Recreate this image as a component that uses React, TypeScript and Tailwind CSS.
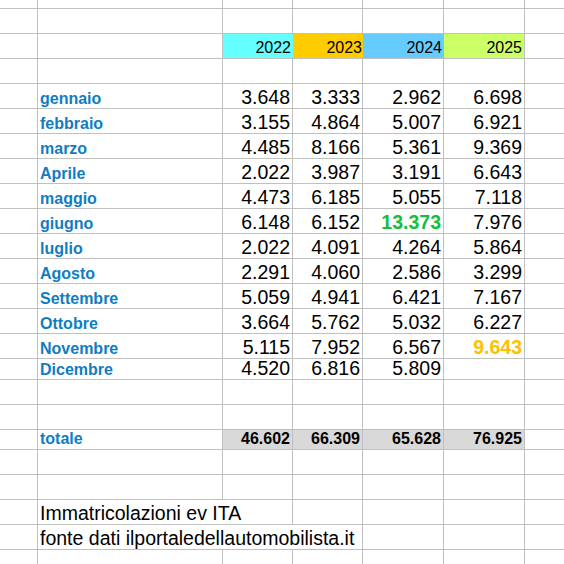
import type { ReactNode } from "react";

type Month = {
  name: string;
  values: (string | null)[];
  accent?: { index: number; className: string };
};

const months: Month[] = [
  { name: "gennaio", values: ["3.648", "3.333", "2.962", "6.698"] },
  { name: "febbraio", values: ["3.155", "4.864", "5.007", "6.921"] },
  { name: "marzo", values: ["4.485", "8.166", "5.361", "9.369"] },
  { name: "Aprile", values: ["2.022", "3.987", "3.191", "6.643"] },
  { name: "maggio", values: ["4.473", "6.185", "5.055", "7.118"] },
  {
    name: "giugno",
    values: ["6.148", "6.152", "13.373", "7.976"],
    accent: { index: 2, className: "font-bold text-[#16bf3e]" },
  },
  { name: "luglio", values: ["2.022", "4.091", "4.264", "5.864"] },
  { name: "Agosto", values: ["2.291", "4.060", "2.586", "3.299"] },
  { name: "Settembre", values: ["5.059", "4.941", "6.421", "7.167"] },
  { name: "Ottobre", values: ["3.664", "5.762", "5.032", "6.227"] },
  {
    name: "Novembre",
    values: ["5.115", "7.952", "6.567", "9.643"],
    accent: { index: 3, className: "font-bold text-[#ffc000]" },
  },
  { name: "Dicembre", values: ["4.520", "6.816", "5.809", null] },
];

const totals = ["46.602", "66.309", "65.628", "76.925"];

function Cell({
  children,
  className = "",
  bg = "bg-white",
}: {
  children?: ReactNode;
  className?: string;
  bg?: string;
}) {
  return (
    <div
      className={`flex items-end overflow-visible whitespace-nowrap ${bg} ${className}`}
    >
      {children}
    </div>
  );
}

function BlankRow() {
  return (
    <>
      {Array.from({ length: 7 }).map((_, i) => (
        <Cell key={i} />
      ))}
    </>
  );
}

function MonthRow({ month }: { month: Month }) {
  return (
    <>
      <Cell />
      <Cell className="pb-[1.5px] pl-[2px] text-[16px] font-bold leading-none text-[#0f7dc2]">
        {month.name}
      </Cell>
      {month.values.map((v, i) => (
        <Cell
          key={i}
          className={`justify-end pb-px pr-[2px] text-[19.5px] leading-none ${
            month.accent?.index === i ? month.accent.className : "text-black"
          }`}
        >
          {v}
        </Cell>
      ))}
      <Cell />
    </>
  );
}

export default function App() {
  return (
    <div className="h-[564px] w-[564px] overflow-hidden bg-white font-['Liberation_Sans',Arial,sans-serif]">
      <div className="grid grid-cols-[37px_184px_69px_69px_80px_80px_1fr] grid-rows-[8px_24px_24px_24px_24px_24px_24px_24px_24px_24px_24px_24px_24px_24px_24px_20px_24px_24px_19px_24px_24px_24px_24px_24px] gap-px bg-[#c0c0c0]">
        <BlankRow />
        <BlankRow />

        {/* intestazione anni */}
        <Cell />
        <Cell />
        <Cell
          bg="bg-[#66ffff]"
          className="mr-[-1px] justify-end pb-[2px] pr-[2px] text-[16px] leading-none"
        >
          2022
        </Cell>
        <Cell
          bg="bg-[#ffcc00]"
          className="mr-[-1px] justify-end pb-[2px] pr-[1px] text-[16px] leading-none"
        >
          2023
        </Cell>
        <Cell
          bg="bg-[#66ccff]"
          className="mr-[-1px] justify-end pb-[2px] pr-[2px] text-[16px] leading-none"
        >
          2024
        </Cell>
        <Cell
          bg="bg-[#ccff66]"
          className="justify-end pb-[2px] pr-[2px] text-[16px] leading-none"
        >
          2025
        </Cell>
        <Cell />

        <BlankRow />

        {months.map((m) => (
          <MonthRow key={m.name} month={m} />
        ))}

        <BlankRow />
        <BlankRow />

        {/* totale */}
        <Cell />
        <Cell className="pb-[2px] pl-[2px] text-[16px] font-bold leading-none text-[#0f7dc2]">
          totale
        </Cell>
        {totals.map((t) => (
          <Cell
            key={t}
            bg="bg-[#d9d9d9]"
            className="justify-end pb-[2px] pr-[2px] text-[16px] font-bold leading-none"
          >
            {t}
          </Cell>
        ))}
        <Cell />

        <BlankRow />
        <BlankRow />

        {/* note */}
        <Cell />
        <Cell className="col-span-2 pb-[1px] pl-[2px] text-[19.5px] leading-none">
          Immatricolazioni ev ITA
        </Cell>
        <Cell />
        <Cell />
        <Cell />
        <Cell />

        <Cell />
        <Cell className="col-span-3 pb-[1px] pl-[2px] text-[19.5px] leading-none">
          fonte dati ilportaledellautomobilista.it
        </Cell>
        <Cell />
        <Cell />
        <Cell />

        <BlankRow />
      </div>
    </div>
  );
}
